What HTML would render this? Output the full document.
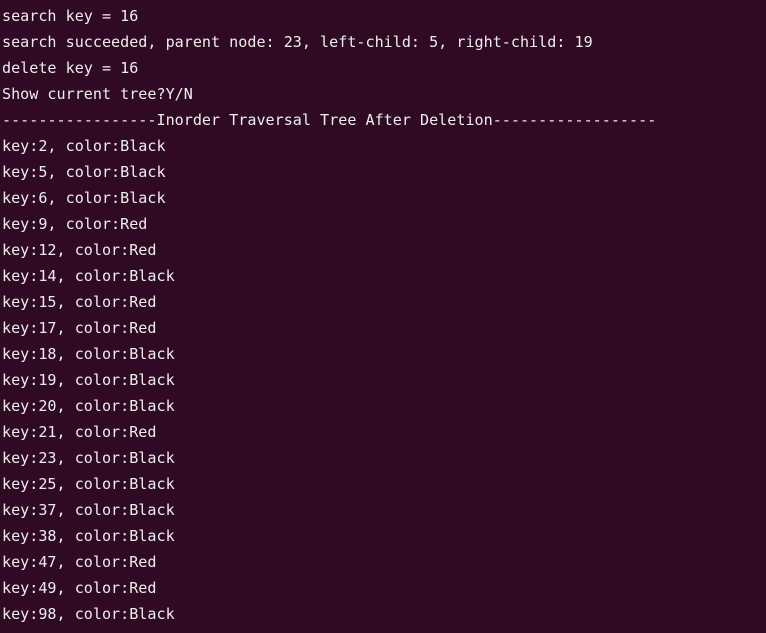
<!DOCTYPE html>
<html><head><style>
html,body{margin:0;padding:0;background:#300a24;width:766px;height:633px;overflow:hidden}
pre{margin:0;padding:3px 0 0 2px;font-family:"DejaVu Sans Mono","Liberation Mono",monospace;font-size:15.1px;line-height:26px;color:#eeeeec;white-space:pre}
</style></head><body><pre>search key = 16
search succeeded, parent node: 23, left-child: 5, right-child: 19
delete key = 16
Show current tree?Y/N
-----------------Inorder Traversal Tree After Deletion------------------
key:2, color:Black
key:5, color:Black
key:6, color:Black
key:9, color:Red
key:12, color:Red
key:14, color:Black
key:15, color:Red
key:17, color:Red
key:18, color:Black
key:19, color:Black
key:20, color:Black
key:21, color:Red
key:23, color:Black
key:25, color:Black
key:37, color:Black
key:38, color:Black
key:47, color:Red
key:49, color:Red
key:98, color:Black</pre></body></html>
